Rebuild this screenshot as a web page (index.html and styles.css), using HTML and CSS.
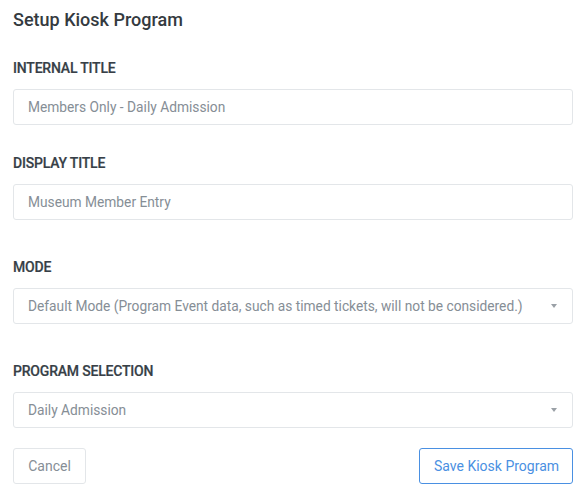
FILE: index.html
```html
<!DOCTYPE html>
<html>
<head>
<meta charset="utf-8">
<link rel="stylesheet" href="styles.css">
</head>
<body>
<div class="panel">
  <h1 class="title">Setup Kiosk Program</h1>
  <div class="field f1">
    <label class="label">INTERNAL TITLE</label>
    <div class="input">Members Only - Daily Admission</div>
  </div>
  <div class="field f2">
    <label class="label">DISPLAY TITLE</label>
    <div class="input">Museum Member Entry</div>
  </div>
  <div class="field f3">
    <label class="label">MODE</label>
    <div class="input select"><span>Default Mode (Program Event data, such as timed tickets, will not be considered.)</span><span class="caret"></span></div>
  </div>
  <div class="field f4">
    <label class="label">PROGRAM SELECTION</label>
    <div class="input select"><span>Daily Admission</span><span class="caret"></span></div>
  </div>
  <div class="actions">
    <button class="btn cancel">Cancel</button>
    <button class="btn save">Save Kiosk Program</button>
  </div>
</div>
</body>
</html>
```
FILE: styles.css
```css
html, body { margin: 0; padding: 0; background: #fff; }
body { font-family: Roboto, "Liberation Sans", sans-serif; }
.panel { padding: 9px 15px 0 13px; }
.title { margin: 0; font-size: 18px; font-weight: 500; color: #343a40; line-height: 22px; }
.field { display: flex; flex-direction: column; }
.f1 { margin-top: 28px; }
.f2 { margin-top: 29px; }
.f3 { margin-top: 38px; }
.f4 { margin-top: 38px; }
.label { font-size: 14px; font-weight: 500; color: #373f47; line-height: 18px; margin-bottom: 12px; letter-spacing: -0.2px; -webkit-text-stroke: 0.2px #373f47; }
.input { box-sizing: border-box; height: 36px; border: 1px solid #e3e6e9; border-radius: 3px; padding: 0 14px; display: flex; align-items: center; font-size: 13.75px; color: #868e96; }
.select { justify-content: space-between; }
.caret { width: 0; height: 0; border-left: 3.5px solid transparent; border-right: 3.5px solid transparent; border-top: 4px solid #9aa0a6; margin-right: 1px; }
.actions { display: flex; justify-content: space-between; margin-top: 20px; }
.btn { box-sizing: border-box; height: 36px; background: #fff; border-radius: 3px; font-family: Roboto, "Liberation Sans", sans-serif; font-size: 14px; padding: 0 14px; white-space: nowrap; }
.cancel { border: 1px solid #e3e6e9; color: #868e96; width: 73px; }
.save { border: 1px solid #4a90e2; color: #4a90e2; width: 154px; }
```
